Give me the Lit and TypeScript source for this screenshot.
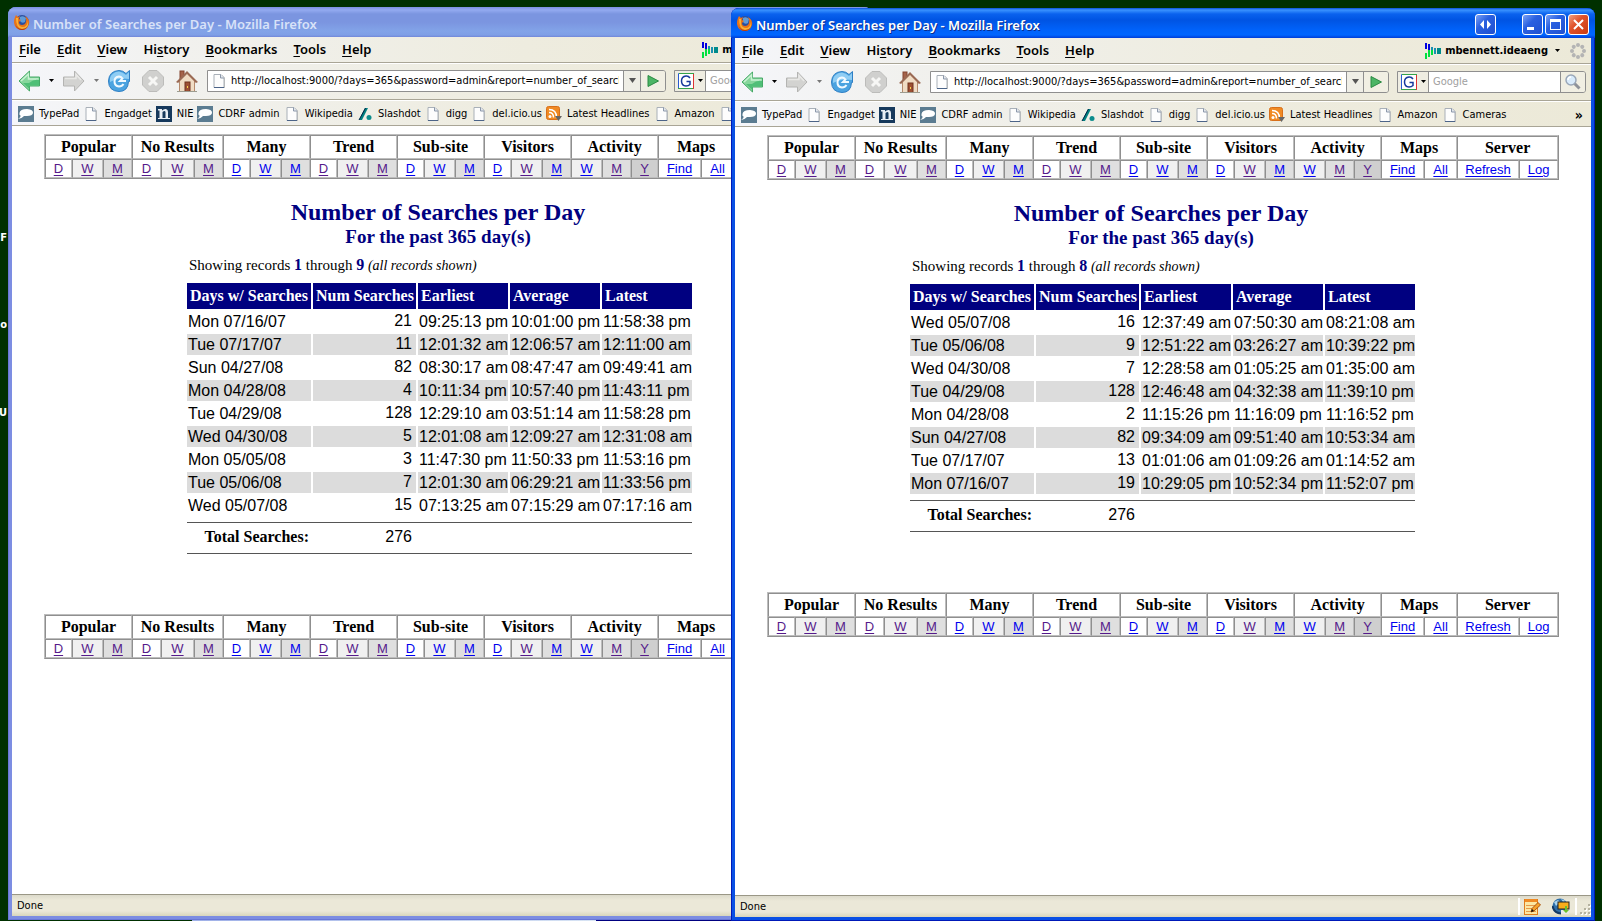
import { LitElement, html, css, svg, nothing } from "lit";
import { customElement, property } from "lit/decorators.js";
import { classMap } from "lit/directives/class-map.js";

type Shade = "d" | "w" | "m" | "y";
interface NavLink { label: string; width: number; shade: Shade; seen?: boolean }
interface NavGroup { title: string; links: NavLink[] }
type Row = [string, number, string, string, string];

const day = (seen = false, width = 27): NavLink => ({ label: "D", width, shade: "d", seen });
const week = (seen = false, width = 31): NavLink => ({ label: "W", width, shade: "w", seen });
const month = (seen = false): NavLink => ({ label: "M", width: 29, shade: "m", seen });

const NAV: NavGroup[] = [
  { title: "Popular", links: [day(true), week(true), month(true)] },
  { title: "No Results", links: [day(true, 29), week(true, 33), month(true)] },
  { title: "Many", links: [day(), week(), month()] },
  { title: "Trend", links: [day(true), week(true), month(true)] },
  { title: "Sub-site", links: [day(), week(), month()] },
  { title: "Visitors", links: [day(), week(true), month()] },
  { title: "Activity", links: [week(), month(true), { label: "Y", width: 27, shade: "y", seen: true }] },
  { title: "Maps", links: [{ label: "Find", width: 43, shade: "d" }, { label: "All", width: 33, shade: "d" }] },
  { title: "Server", links: [{ label: "Refresh", width: 62, shade: "d" }, { label: "Log", width: 39, shade: "d" }] },
];

const ASCENDING: Row[] = [
  ["Mon 07/16/07", 21, "09:25:13 pm", "10:01:00 pm", "11:58:38 pm"],
  ["Tue 07/17/07", 11, "12:01:32 am", "12:06:57 am", "12:11:00 am"],
  ["Sun 04/27/08", 82, "08:30:17 am", "08:47:47 am", "09:49:41 am"],
  ["Mon 04/28/08", 4, "10:11:34 pm", "10:57:40 pm", "11:43:11 pm"],
  ["Tue 04/29/08", 128, "12:29:10 am", "03:51:14 am", "11:58:28 pm"],
  ["Wed 04/30/08", 5, "12:01:08 am", "12:09:27 am", "12:31:08 am"],
  ["Mon 05/05/08", 3, "11:47:30 pm", "11:50:33 pm", "11:53:16 pm"],
  ["Tue 05/06/08", 7, "12:01:30 am", "06:29:21 am", "11:33:56 pm"],
  ["Wed 05/07/08", 15, "07:13:25 am", "07:15:29 am", "07:17:16 am"],
];

const DESCENDING: Row[] = [
  ["Wed 05/07/08", 16, "12:37:49 am", "07:50:30 am", "08:21:08 am"],
  ["Tue 05/06/08", 9, "12:51:22 am", "03:26:27 am", "10:39:22 pm"],
  ["Wed 04/30/08", 7, "12:28:58 am", "01:05:25 am", "01:35:00 am"],
  ["Tue 04/29/08", 128, "12:46:48 am", "04:32:38 am", "11:39:10 pm"],
  ["Mon 04/28/08", 2, "11:15:26 pm", "11:16:09 pm", "11:16:52 pm"],
  ["Sun 04/27/08", 82, "09:34:09 am", "09:51:40 am", "10:53:34 am"],
  ["Tue 07/17/07", 13, "01:01:06 am", "01:09:26 am", "01:14:52 am"],
  ["Mon 07/16/07", 19, "10:29:05 pm", "10:52:34 pm", "11:52:07 pm"],
];

/* ---------- icons ---------- */

const frame = (w: number, h: number, body: unknown) =>
  html`<svg width=${w} height=${h} viewBox="0 0 ${w} ${h}" aria-hidden="true">${body}</svg>`;

const firefox = frame(16, 16, svg`
  <circle cx="8" cy="8" r="7" fill="#2c4f9e"/>
  <path d="M6 3 Q9 1 12 4 L11 8 Q8 10 6 7 Z" fill="#5f9bd8"/>
  <path d="M1 3 L2 1 L4 3 L6 2 L5 5 L7 6 L5 8 Q5 11 8 11 Q11 11 12 8 Q13 5 11 2 Q16 5 15 10 Q13 16 8 16 Q1 16 0 9 Q0 5 1 3 Z" fill="#e8731a"/>
  <path d="M2 4 L4 4 L4 9 Q5 13 9 13 Q13 13 14 7 Q15 15 8 15 Q2 14 2 4 Z" fill="#f9b233"/>
  <path d="M1 10 Q3 15 8 15 Q12 15 14 12 Q12 16 8 16 Q3 16 1 10 Z" fill="#b23c12"/>`);

const pageIcon = frame(16, 16, svg`
  <path d="M4 2 H11 L14 5 V15 H4 Z" fill="#c4c4c0"/>
  <path d="M3 1.500 H10 L13 4.500 V14.500 H3 Z" fill="#fdfdfd" stroke="#a9b0b8"/>
  <path d="M9.500 1.500 V5 H13" fill="#e4e8ee" stroke="#8c98aa"/>
  <path d="M3 14.500 H13" stroke="#4c6488"/>`);

const bubbleIcon = frame(16, 16, svg`
  <rect width="16" height="16" fill="#5b7c91"/>
  <path d="M9 3 Q15.500 3.500 15 7 Q14.500 10 9 10 L6 10 Q4 12.500 0 13 Q3 11 2.500 9.500 Q1 9 1.500 7 Q2 3 9 3Z" fill="#fff"/>`);

const nieIcon = frame(16, 16, svg`
  <rect width="16" height="16" fill="#16395c"/>
  <path d="M2 3 H6 V4.500 Q8 2.500 10 3 Q12 3.500 12 6 V12 H14 V13 H8 V12 H9.500 V6 Q9 4 6.500 6 V12 H8 V13 H2 V12 H3.500 V4.500 H2 Z" fill="#e8eef4"/>`);

const slashIcon = frame(16, 16, svg`
  <path d="M8 2 H11 L5 14 H2 Z" fill="#008080"/><path d="M8.500 2 L2 14" stroke="#024"/>
  <circle cx="12" cy="11.500" r="2.500" fill="#0c8c8c"/>`);

const feedIcon = frame(16, 16, svg`
  <rect x="0.500" y="0.500" width="13" height="13" rx="2" fill="#f08a24" stroke="#d8701a"/>
  <circle cx="4" cy="10.500" r="1.500" fill="#fff"/>
  <path d="M3 6.500 Q7.500 6.500 7.500 11.500 M3 3.500 Q10.500 3.500 10.500 11.500" fill="none" stroke="#fff" stroke-width="1.500"/>
  <path d="M9 10 H16 L12.500 15 Z" fill="#666"/>`);

const backIcon = frame(22, 22, svg`
  <path d="M1 11 L11.500 1 V7 H21.500 V16 H11.500 V21 Z" fill="#86d69c" stroke="#45a866"/>
  <path d="M3 11 L10.500 4 V9 Q16 9 20.500 9" fill="none" stroke="#c9f2d3" stroke-width="1.500"/>
  <path d="M11 13 Q16 9 21 10 V15.500 H11.500 V19 L5 13 Z" fill="#4fbf77"/>`);

const forwardIcon = frame(22, 22, svg`
  <path d="M21 11 L11.500 1 V7 H0.500 V16 H11.500 V21 Z" fill="#d3d3d1" stroke="#b4b4b2"/>
  <path d="M2 8.500 H13 V4.500 L18 10" fill="none" stroke="#e9e9e7" stroke-width="1.500"/>`);

const reloadIcon = frame(22, 22, svg`
  <path d="M11 0.500 Q15 0.500 18 3.500 L21.500 0.500 V11.500 H20.500 Q20 21.500 11 21.500 Q0.500 21 0.500 11 Q1 1 11 0.500 Z" fill="#4ba3e0" stroke="#2f7fc4"/>
  <path d="M2 8 Q4 2 11 1.500 Q15 2 18 5 L21 2 V9 Q11 7 2 12 Z" fill="#8fcdf4"/>
  <path d="M15.500 14 Q14 16.500 11 16.500 Q6.500 16 6.500 11.500 Q6.500 7 11 6.500 Q13 6.500 14.500 8.500 L12 11 H18" fill="none" stroke="#f0f9ff" stroke-width="2"/>`);

const stopIcon = frame(22, 22, svg`
  <path d="M7 0.500 H15 L21.500 7 V15 L15 21.500 H7 L0.500 15 V7 Z" fill="#d0d0ce" stroke="#bcbcba"/>
  <path d="M7 7 L15 15 M15 7 L7 15" stroke="#f7f7f5" stroke-width="3"/>`);

const homeIcon = frame(22, 22, svg`
  <rect x="4" y="1" width="4" height="8" fill="#a5634a" stroke="#84452f"/>
  <path d="M3.500 10 L11 3 L18.500 10 V21.500 H3.500 Z" fill="#f0dcc4" stroke="#b58a6c"/>
  <path d="M0 12 L11 1 L22 12 L20 13 L11 4 L2 13 Z" fill="#9a6a54"/>
  <rect x="9" y="12" width="5" height="9.500" fill="#9c4f33" stroke="#71331d"/>
  <rect x="11" y="16" width="1" height="2" fill="#f8d24a"/>
  <path d="M1 21.500 H21" stroke="#9c9c90"/>`);

const caret = frame(5, 3, svg`<path d="M0 0 H5 L2.500 3 Z" fill="currentColor"/>`);
const bigCaret = frame(7, 5, svg`<path d="M0 0 H7 L3.500 5 Z" fill="#555"/>`);
const goIcon = frame(12, 12, svg`<path d="M1 0.500 L11.500 6 L1 11.500 Z" fill="#4cb565" stroke="#2b8a43"/>`);
const googleIcon = frame(16, 16, svg`
  <rect width="16" height="16" fill="#fff"/>
  <path d="M0.500 16 V0.500 H15" fill="none" stroke="#2a5bd0"/><path d="M1 0.500 H16 M0 15.500 H15" stroke="#35a34a"/><path d="M15.500 1 V16" stroke="#d33"/>
  <path d="M12 5 Q10.500 2.800 8 3 Q3.500 3.500 3.500 8 Q3.500 12.700 8 13 Q10.500 13 12 11.500 V8.500 H8.500" fill="none" stroke="#16389c" stroke-width="1.500"/>`);
const lensIcon = frame(16, 16, svg`
  <path d="M9 9 L14.500 14.500" stroke="#8f9299" stroke-width="3"/>
  <circle cx="6" cy="6" r="5" fill="#d9ebfb" stroke="#9aa7b8" stroke-width="1.500"/>
  <path d="M3 6 Q3 3 6 3" stroke="#fff" fill="none" stroke-width="1.500"/>`);
const userIcon = frame(16, 16, svg`
  <path d="M0 0 H2 V6 H0Z M3 1 H5 V8 H3Z" fill="#0000e0"/>
  <path d="M0 10 H2 V16 H0Z M3 7 H5 V14 H3Z M6 4 H8 V12 H6Z" fill="#00e040"/>
  <path d="M6 4 H8 V7 H6Z M9 5 H11 V11 H9Z" fill="#1a90b0"/><path d="M12 5 H16 V11 H12Z" fill="#008b8b"/>`);
const throbber = frame(16, 16, svg`${[0, 45, 90, 135, 180, 225, 270, 315].map(
  (a) => svg`<circle cx="8" cy="2" r="2" fill="#b4b4b4" transform="rotate(${a} 8 8)"/>`)}`);
const noteIcon = frame(17, 17, svg`
  <rect x="0.500" y="1.500" width="13" height="15" fill="#fbe7a4" stroke="#e07d1c"/>
  <rect x="1" y="1" width="12" height="3" fill="#f08a24"/>
  <path d="M2 7.500 H12 M2 10.500 H12 M2 13.500 H12" stroke="#e89a4a"/>
  <path d="M7 14 L8 10.500 L14 4.500 L16.500 7 L10 13 Z" fill="#f6a12c" stroke="#a85510"/><path d="M7 14 L8 11 L10 13Z" fill="#111"/>`);
const globeIcon = frame(18, 17, svg`
  <circle cx="8" cy="8" r="7.500" fill="#2f6fa8"/><path d="M2 4 L6 2 L8 4 L4 8 Z M9 1 L14 3 L11 4Z" fill="#a8d3ee"/>
  <path d="M0.500 8 Q2 15 9 15.500" stroke="#143a66" fill="none" stroke-width="2"/>
  <rect x="6" y="4" width="11" height="7" fill="#f9ad1c" stroke="#222"/>
  <rect x="9" y="12" width="8" height="4" fill="#e8e8e8"/><path d="M13 8 V12 H11 L14 15 L17 12 H15 V8Z" fill="#6cc02c"/>`);
const grip = frame(12, 12, svg`${[[9, 0], [5, 4], [9, 4], [1, 8], [5, 8], [9, 8]].map(
  ([x, y]) => svg`<rect x=${x + 1} y=${y + 1} width="2" height="2" fill="#fff"/><rect x=${x} y=${y} width="2" height="2" fill="#b5b2a0"/>`)}`);

const BOOKMARKS: [string, unknown][] = [
  ["TypePad", bubbleIcon], ["Engadget", pageIcon], ["NIE", nieIcon], ["CDRF admin", bubbleIcon],
  ["Wikipedia", pageIcon], ["Slashdot", slashIcon], ["digg", pageIcon], ["del.icio.us", pageIcon],
  ["Latest Headlines", feedIcon], ["Amazon", pageIcon], ["Cameras", pageIcon],
];

const MENUS: [string, string, string][] = [
  ["", "F", "ile"], ["", "E", "dit"], ["", "V", "iew"], ["Hi", "s", "tory"],
  ["", "B", "ookmarks"], ["", "T", "ools"], ["", "H", "elp"],
];

/* ---------- report navigation ---------- */

@customElement("report-nav")
export class ReportNav extends LitElement {
  static styles = css`
    :host { display: block; }
    .nav { table-layout: fixed; width: 792px; margin: 0 auto; border-spacing: 0; border: 1px solid; border-color: #bdbdbd #8f8f8f #8f8f8f #bdbdbd; }
    .head, .cell { padding: 0; border: 1px solid; border-color: #8f8f8f #bdbdbd #bdbdbd #8f8f8f; text-align: center; white-space: nowrap; }
    .head { height: 22px; font: bold 16px/22px "Liberation Serif", serif; }
    .cell { height: 17px; font: 13px/17px "Liberation Sans", sans-serif; }
    .w { background: #f0f0f0; }
    .m { background: #dfdfdf; }
    .y { background: #cfcfcf; }
    .link { color: #0000ee; text-decoration: underline; text-underline-offset: 2px; }
    .seen { color: #551a8b; }
  `;

  render() {
    return html`<table class="nav">
      <colgroup>${NAV.map((g) => g.links.map((l) => html`<col style="width:${l.width}px">`))}</colgroup>
      <thead><tr>${NAV.map((g) => html`<th class="head" colspan=${g.links.length}>${g.title}</th>`)}</tr></thead>
      <tbody><tr>${NAV.map((g) => g.links.map((l) => html`<td class="cell ${l.shade}"><a
        class=${classMap({ link: true, seen: !!l.seen })} href="#">${l.label}</a></td>`))}</tr></tbody>
    </table>`;
  }
}

/* ---------- report page ---------- */

@customElement("search-report")
export class SearchReport extends LitElement {
  @property({ attribute: false }) rows: Row[] = [];

  static styles = css`
    :host { display: block; padding-top: 8px; color: #000; font-family: "Liberation Serif", serif; }
    .title { margin: 19px 4px 0 0; font-size: 24px; line-height: 28px; color: #000080; text-align: center; }
    .subtitle { margin: 0 4px 0 0; font-size: 19px; line-height: 22px; color: #000080; text-align: center; }
    .report { width: 510px; margin: 7px auto 54px; }
    .summary { margin: 0 0 5px; padding-left: 4px; font-size: 15px; line-height: 20px; }
    .count { font-size: 16px; color: #000080; }
    .aside { font-size: 14px; }
    .data { table-layout: fixed; width: 509px; border-spacing: 2px; }
    .day { width: 124px; }
    .num { width: 103px; }
    .time { width: 90px; }
    .head { height: 26px; padding: 0 3px; background: #000080; color: #fff; font-size: 16px; line-height: 20px; text-align: left; white-space: nowrap; }
    .cell { height: 21px; padding: 0 0 0 1px; font: 16px/21px "Liberation Sans", sans-serif; white-space: nowrap; }
    .amount { padding-right: 4px; text-align: right; line-height: 19px; vertical-align: top; }
    .row:nth-child(even) .cell { background: #dcdcdc; }
    .rule { height: 9px; padding: 0; }
    .line { height: 1px; margin: 0; border: 0; background: #555; }
    .total { height: 18px; padding: 0 2px 0 0; font-size: 16px; line-height: 15px; text-align: right; vertical-align: top; white-space: nowrap; }
    .sum { padding-right: 4px; font-family: "Liberation Sans", sans-serif; }
  `;

  render() {
    const total = this.rows.reduce((sum, r) => sum + r[1], 0);
    const rule = html`<tr><td class="rule" colspan="5"><hr class="line"></td></tr>`;
    return html`
      <report-nav></report-nav>
      <h1 class="title">Number of Searches per Day</h1>
      <h2 class="subtitle">For the past 365 day(s)</h2>
      <section class="report">
        <p class="summary">Showing records <b class="count">1</b> through <b class="count">${this.rows.length}</b> <i class="aside">(all records shown)</i></p>
        <table class="data">
          <colgroup><col class="day"><col class="num"><col class="time"><col class="time"><col class="time"></colgroup>
          <thead><tr>${["Days w/ Searches", "Num Searches", "Earliest", "Average", "Latest"].map((h) => html`<th class="head" scope="col">${h}</th>`)}</tr></thead>
          <tbody>${this.rows.map((r) => html`<tr class="row">${r.map((v, i) => html`<td class=${classMap({ cell: true, amount: i === 1 })}>${v}</td>`)}</tr>`)}</tbody>
          <tfoot>${rule}
            <tr><th class="total" scope="row">Total Searches:</th><td class="total sum">${total}</td><td colspan="3"></td></tr>
            ${rule}</tfoot>
        </table>
      </section>
      <report-nav></report-nav>`;
  }
}

/* ---------- browser window ---------- */

@customElement("browser-window")
export class BrowserWindow extends LitElement {
  @property({ type: Boolean, reflect: true }) active = false;
  @property({ attribute: false }) rows: Row[] = [];

  static styles = css`
    :host {
      --edge: #6a78d6; --frame: #7c8de2; --caption: #d8e2f8; --shadow: none;
      --bar: linear-gradient(#7c90e0 0, #93aaf0 3px, #7b95e0 7px, #7b95e0 15px, #82a3e8 24px, #7f9fe6 28px, #7186d8 30px);
      display: flex; flex-direction: column; box-sizing: border-box;
      padding: 0 4px 4px; border-radius: 8px 8px 0 0; overflow: hidden;
      background: var(--frame); box-shadow: inset 0 0 0 1px var(--edge);
      font: 11px/16px "DejaVu Sans Condensed", "DejaVu Sans", sans-serif; color: #000;
    }
    :host([active]) {
      --edge: #0019b8; --frame: #0a50e4; --caption: #fff; --shadow: 1px 1px 0 #0a2c8c;
      --bar: linear-gradient(#0a4fd8 0, #3a93ff 2px, #0a62ee 6px, #0054e3 12px, #0062fa 22px, #0066ff 27px, #003dd7 30px);
    }
    .caption { display: flex; align-items: center; gap: 3px; height: 30px; flex: none; margin: 0 -4px; padding: 0 6px; background: var(--bar); box-sizing: border-box; }
    .name { flex: 1; margin: 0; font: 600 13px/18px "Noto Sans", sans-serif; color: var(--caption); text-shadow: var(--shadow); white-space: nowrap; padding-top: 3px; }
    .controls { display: flex; gap: 2px; padding-top: 3px; }
    .control { display: grid; place-items: center; box-sizing: border-box; width: 21px; height: 21px; padding: 0; border: 1px solid #fff; border-radius: 3px; background: linear-gradient(135deg, #7ba2f5, #2a60e0 40%, #1f50d0); color: #fff; }
    .extra { margin-right: 24px; }
    .close { background: linear-gradient(135deg, #f0a080, #e0532c 40%, #c93a10); }
    .chrome, .menus, .tools, .marks { display: flex; align-items: center; flex: none; box-sizing: border-box; }
    .chrome { flex-direction: column; align-items: stretch; background: linear-gradient(to right, #f5f6fa, #f1f1ee 20%, #eeecdf 60%, #ece9d8); }
    .menus, .tools, .marks { border-bottom: 1px solid #a9a596; }
    .menus { height: 26px; padding: 0 5px 0 7px; gap: 16px; }
    .button { display: flex; align-items: center; padding: 0; border: 0; background: none; font: inherit; color: inherit; white-space: nowrap; }
    .menu { display: block; padding-bottom: 2px; font: 600 13px/18px "Noto Sans", sans-serif; }
    .menu u { text-underline-offset: 2px; }
    .user { gap: 4px; margin-left: auto; font-weight: bold; }
    .user svg:last-child { margin-left: 3px; }
    .busy { display: flex; margin-left: -6px; }
    .tools { height: 37px; padding: 0 5px 2px 6px; border-top: 1px solid #fff; }
    .step { color: #000; gap: 9px; margin-right: 9px; }
    .dim { color: #777; }
    .tool { margin-right: 12px; }
    .home { margin-right: 9px; }
    .box { display: flex; box-sizing: border-box; height: 22px; border: 1px solid #8f8f8f; border-radius: 0 3px 3px 0; overflow: hidden; }
    .address { flex: 1; min-width: 0; margin-right: 8px; }
    .place { display: flex; align-items: center; padding-left: 3px; background: #fff; }
    .field { flex: 1; min-width: 0; box-sizing: border-box; padding: 0 4px; border: 0; background: #fff; font: inherit; color: #000; outline: 0; border-radius: 0; }
    .field::placeholder { color: #a0a0a0; opacity: 1; }
    .drop { justify-content: center; width: 17px; border-left: 1px solid #8f8f8f; background: #efeee6; }
    .go { justify-content: center; width: 25px; border-left: 1px solid #8f8f8f; background: #f1efe3; }
    .search { width: 189px; }
    .engine { gap: 4px; width: 31px; padding-left: 3px; border-right: 1px solid #8f8f8f; background: #efede2; box-sizing: border-box; }
    .marks { height: 26px; padding: 2px 8px 0 6px; gap: 4px; border-top: 1px solid #fff; }
    .mark { display: flex; align-items: center; gap: 5px; color: #000; text-decoration: none; white-space: nowrap; }
    .more { margin-left: auto; font-size: 14px; font-weight: bold; }
    .page { flex: 1; min-height: 0; overflow: hidden; background: #fff; }
    .status { display: flex; align-items: center; flex: none; height: 22px; box-sizing: border-box; padding-left: 5px; border-top: 1px solid #9a9786; background: linear-gradient(#dcdacb, #ebe8d8 5px, #ebe8d8 16px, #d8d6bc); }
    .note { flex: 1; }
    .tray { display: flex; gap: 11px; padding: 0 5px 0 4px; border: solid #fff; border-width: 0 2px; }
    .size { display: flex; padding: 6px 0 0 2px; }
  `;

  render() {
    const id = this.active ? "front" : "back";
    return html`
      <header class="caption">${firefox}<p class="name">Number of Searches per Day - Mozilla Firefox</p>
        <div class="controls">
          <button class="control extra" aria-label="Move window">${frame(13, 9, svg`<path d="M5 0 V9 L1 4.500Z M8 0 V9 L12 4.500Z" fill="#fff"/>`)}</button>
          <button class="control" aria-label="Minimize">${frame(13, 13, svg`<rect x="1" y="9" width="7" height="3" fill="#fff"/>`)}</button>
          <button class="control" aria-label="Maximize">${frame(13, 13, svg`<rect x="1.500" y="1.500" width="10" height="10" fill="none" stroke="#fff"/><rect x="1" y="1" width="11" height="3" fill="#fff"/>`)}</button>
          <button class="control close" aria-label="Close">${frame(13, 13, svg`<path d="M2 2 L11 11 M11 2 L2 11" stroke="#fff" stroke-width="2"/>`)}</button>
        </div>
      </header>
      <div class="chrome">
        <nav class="menus">
          ${MENUS.map(([a, key, b]) => html`<button class="button menu">${a}<u>${key}</u>${b}</button>`)}
          <button class="button user">${userIcon}<span>mbennett.ideaeng</span>${caret}</button>
          <span class="busy">${throbber}</span>
        </nav>
        <div class="tools">
          <button class="button step" aria-label="Back">${backIcon}${caret}</button>
          <button class="button step dim" aria-label="Forward">${forwardIcon}${caret}</button>
          <button class="button tool" aria-label="Reload">${reloadIcon}</button>
          <button class="button tool" aria-label="Stop">${stopIcon}</button>
          <button class="button home" aria-label="Home">${homeIcon}</button>
          <div class="box address">
            <label class="place" for="${id}-url" aria-label="Address">${pageIcon}</label>
            <input class="field" id="${id}-url" value="http://localhost:9000/?days=365&amp;password=admin&amp;report=number_of_searches_per_day">
            <button class="button drop" aria-label="Show history">${bigCaret}</button>
            <button class="button go" aria-label="Go">${goIcon}</button>
          </div>
          <div class="box search">
            <button class="button engine" aria-label="Search engine">${googleIcon}${caret}</button>
            <input class="field" aria-label="Search" placeholder="Google">
            <button class="button go" aria-label="Search">${lensIcon}</button>
          </div>
        </div>
        <nav class="marks">
          ${BOOKMARKS.map(([label, icon]) => html`<a class="mark" href="#">${icon}<span>${label}</span></a>`)}
          <button class="button more" aria-label="More bookmarks">»</button>
        </nav>
      </div>
      <main class="page"><search-report .rows=${this.rows}></search-report></main>
      <footer class="status"><span class="note">Done</span>
        ${this.active ? html`<span class="tray">${noteIcon}${globeIcon}</span><span class="size">${grip}</span>` : nothing}
      </footer>`;
  }
}

/* ---------- desktop ---------- */

@customElement("app-root")
export class AppRoot extends LitElement {
  static styles = css`
    :host { display: block; position: relative; height: 100vh; overflow: hidden; background: #003000; }
    .window { position: absolute; }
    .rear { inset: 7px 730px 1px 8px; }
    .front { inset: 8px 7px 0 731px; }
    .label { position: absolute; left: 0; width: 7px; overflow: hidden; display: flex; justify-content: flex-end; color: #fff; font: bold 11px/14px "DejaVu Sans Condensed", sans-serif; }
    .first { top: 231px; }
    .second { top: 318px; }
    .third { top: 406px; }
    .taskbar { position: absolute; left: 192px; right: 871px; bottom: 0; height: 1px; background: linear-gradient(to right, #9fb0e8 0, #d8e4f4 75%, #000080 75%); }
  `;

  render() {
    return html`
      <span class="label first">F</span>
      <span class="label second">o</span>
      <span class="label third">AU</span>
      <div class="taskbar"></div>
      <browser-window class="window rear" .rows=${ASCENDING}></browser-window>
      <browser-window class="window front" active .rows=${DESCENDING}></browser-window>`;
  }
}
